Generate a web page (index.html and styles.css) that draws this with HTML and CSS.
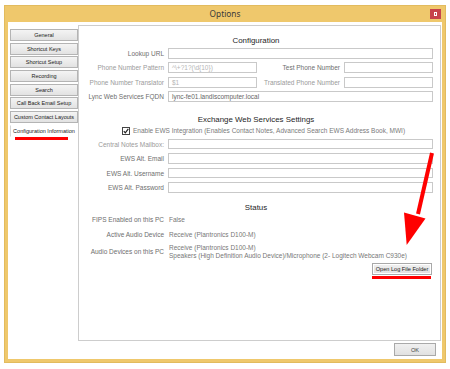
FILE: index.html
```html
<!DOCTYPE html>
<html lang="en">
<head>
  <meta charset="UTF-8" />
  <title>Options</title>
  <link rel="stylesheet" href="styles.css">
</head>
<body>
  <div class="window">
    <div class="titlebar">
      <span></span>
      <span class="title">Options</span>
      <span class="close"><i></i></span>
    </div>

    <div class="window-body">
      <div class="main">
        <!-- Tabs -->
        <div class="tabs">
          <div class="tab">General</div>
          <div class="tab">Shortcut Keys</div>
          <div class="tab">Shortcut Setup</div>
          <div class="tab">Recording</div>
          <div class="tab">Search</div>
          <div class="tab">Call Back Email Setup</div>
          <div class="tab">Custom Contact Layouts</div>
          <div class="tab active">Configuration Information</div>
          <div class="mark tab-mark"></div>
        </div>

        <!-- Tab page -->
        <div class="panel">
          <h2>Configuration</h2>
          <div class="config-grid">
            <label class="lbl">Lookup URL</label>
            <div class="field span3"></div>

            <label class="lbl dim">Phone Number Pattern</label>
            <div class="field placeholder">^\+?1?(\d{10})</div>
            <label class="lbl">Test Phone Number</label>
            <div class="field"></div>

            <label class="lbl dim">Phone Number Translator</label>
            <div class="field placeholder">$1</div>
            <label class="lbl dim">Translated Phone Number</label>
            <div class="field"></div>

            <label class="lbl">Lync Web Services FQDN</label>
            <div class="field span3">lync-fe01.landiscomputer.local</div>
          </div>

          <h2 class="section">Exchange Web Services Settings</h2>
          <div class="check-row">
            <svg class="checkbox" width="8" height="8" viewBox="0 0 8 8">
              <rect x="0.5" y="0.5" width="7" height="7" fill="#fff" stroke="#444"/>
              <path d="M1.8 4.2 L3.3 5.8 L6.3 1.9" fill="none" stroke="#222" stroke-width="1.2"/>
            </svg>
            <span>Enable EWS Integration (Enables Contact Notes, Advanced Search EWS Address Book, MWI)</span>
          </div>
          <div class="ews-grid">
            <label class="lbl dim">Central Notes Mailbox:</label>
            <div class="field"></div>
            <label class="lbl">EWS Alt. Email</label>
            <div class="field"></div>
            <label class="lbl">EWS Alt. Username</label>
            <div class="field"></div>
            <label class="lbl">EWS Alt. Password</label>
            <div class="field"></div>
          </div>

          <h2 class="section status-title">Status</h2>
          <div class="status-grid">
            <span class="lbl">FIPS Enabled on this PC</span>
            <span class="value">False</span>
            <span class="lbl">Active Audio Device</span>
            <span class="value">Receive (Plantronics D100-M)</span>
            <span class="lbl">Audio Devices on this PC</span>
            <span class="value">Receive (Plantronics D100-M)<br>Speakers (High Definition Audio Device)/Microphone (2- Logitech Webcam C930e)</span>
          </div>

          <div class="actions">
            <button class="btn log-btn">Open Log File Folder</button>
            <div class="mark btn-mark"></div>
          </div>
        </div>
      </div>

      <div class="footer">
        <button class="btn ok-btn">OK</button>
      </div>
    </div>

    <!-- annotation arrow -->
    <svg class="arrow" width="50" height="110" viewBox="395 145 50 110">
      <line x1="432" y1="153" x2="418" y2="214" stroke="#ff0000" stroke-width="4"/>
      <polygon points="404,212.5 425.5,218.5 406.7,245" fill="#ff0000"/>
    </svg>
  </div>
</body>
</html>
```

FILE: styles.css
```css
* {
  box-sizing: border-box;
}

body {
  margin: 0;
  background: #fff;
  font-family: "Liberation Sans", Arial, sans-serif;
}

.window {
  position: relative;
  margin: 5px 4px 0;
  height: 358px;
  display: flex;
  flex-direction: column;
  background: #efc86c;
  box-shadow: 0 0 0 1px #e2bb5e inset;
}

.titlebar {
  height: 17px;
  display: grid;
  grid-template-columns: 1fr auto 1fr;
  align-items: center;
}

.title {
  font-family: "Noto Sans", "Liberation Sans", sans-serif;
  font-size: 8.3px;
  color: #3a3a3a;
}

.close {
  justify-self: end;
  margin-right: 5px;
  margin-top: 1px;
  width: 11px;
  height: 10px;
  background: #c7434a;
  display: flex;
  align-items: center;
  justify-content: center;
}

.close i {
  display: block;
  width: 3px;
  height: 4px;
  border: 1px solid #fff;
}

.window-body {
  flex: 1;
  margin: 0 4px 4px;
  background: #fff;
  padding: 3px 0 0 2px;
  display: flex;
  flex-direction: column;
}

.main {
  display: flex;
}

/* tabs */
.tabs {
  width: 68px;
  padding-top: 4px;
  display: flex;
  flex-direction: column;
  gap: 1.7px;
}

.tab {
  height: 12px;
  border: 1px solid #b4b4b4;
  background: linear-gradient(#f4f4f4, #e2e2e2);
  font-size: 5.5px;
  color: #222;
  display: flex;
  align-items: center;
  justify-content: center;
  white-space: nowrap;
}

.tab.active {
  background: #fff;
  border-color: #fff;
  border-left-color: #d6d6d6;
}

.mark {
  background: #ff0000;
}

.tab-mark {
  margin: -1.7px 0 0 5px;
  width: 53px;
  height: 3px;
}

/* panel */
.panel {
  flex: 1;
  height: 316px;
  margin-right: 1px;
  border: 1px solid #cdcdcd;
  padding: 10px 7px 0 0;
}

h2 {
  margin: 0 0 2px;
  font-size: 7.9px;
  line-height: 10px;
  font-weight: normal;
  color: #1e1e1e;
  text-align: center;
}

h2.section {
  margin-top: 13px;
  margin-bottom: 1px;
}

h2.status-title {
  margin-top: 10px;
  margin-bottom: 0;
}

.lbl {
  font-size: 6.5px;
  color: #6e6e6e;
  text-align: right;
  white-space: nowrap;
}

.lbl.dim {
  color: #9a9a9a;
}

.config-grid {
  display: grid;
  grid-template-columns: 85px 89px 1fr 89px;
  grid-auto-rows: 11px;
  column-gap: 4px;
  row-gap: 3.33px;
  align-items: center;
}

.field {
  height: 100%;
  border: 1px solid #c9c9c9;
  background: #fff;
  font-size: 6.5px;
  line-height: 9px;
  padding-left: 3px;
  color: #666;
  white-space: nowrap;
  overflow: hidden;
}

.field.placeholder {
  color: #b5b5b5;
}

.span3 {
  grid-column: span 3;
}

.check-row {
  height: 10px;
  margin-left: 43px;
  display: flex;
  align-items: center;
  gap: 3px;
  font-size: 6.5px;
  color: #7a7a7a;
  white-space: nowrap;
}

.ews-grid {
  margin-top: 3px;
  display: grid;
  grid-template-columns: 85px 1fr;
  grid-auto-rows: 10.5px;
  column-gap: 4px;
  row-gap: 3.9px;
  align-items: center;
}

.status-grid {
  margin-top: 3px;
  display: grid;
  grid-template-columns: 85px 1fr;
  column-gap: 5px;
  row-gap: 7px;
  align-items: center;
  line-height: 8px;
}

.status-grid .lbl:nth-child(5) {
  margin-top: -1.8px;
}

.status-grid .value:last-child {
  line-height: 7.7px;
  margin-top: -1.8px;
}

.value {
  font-size: 6.5px;
  color: #777;
  white-space: nowrap;
}

.actions {
  margin-top: 3.4px;
  display: flex;
  flex-direction: column;
  align-items: flex-end;
}

.btn {
  font-family: "Liberation Sans", Arial, sans-serif;
  background: linear-gradient(#f0f0f0, #e1e1e1);
  border: 1px solid #a9a9a9;
  color: #1a1a1a;
  padding: 0;
  font-size: 5.6px;
}

.log-btn {
  width: 60px;
  height: 12px;
  margin-right: 1px;
  box-shadow: inset 0 0 0 1px #fff;
}

.btn-mark {
  margin: 1px 2px 0 0;
  width: 59px;
  height: 3.5px;
}

.footer {
  display: flex;
  justify-content: flex-end;
  padding: 2px 6px 0 0;
}

.ok-btn {
  width: 42px;
  height: 13px;
  color: #444;
}

.arrow {
  position: absolute;
  left: 391px;
  top: 140px;
}
```
